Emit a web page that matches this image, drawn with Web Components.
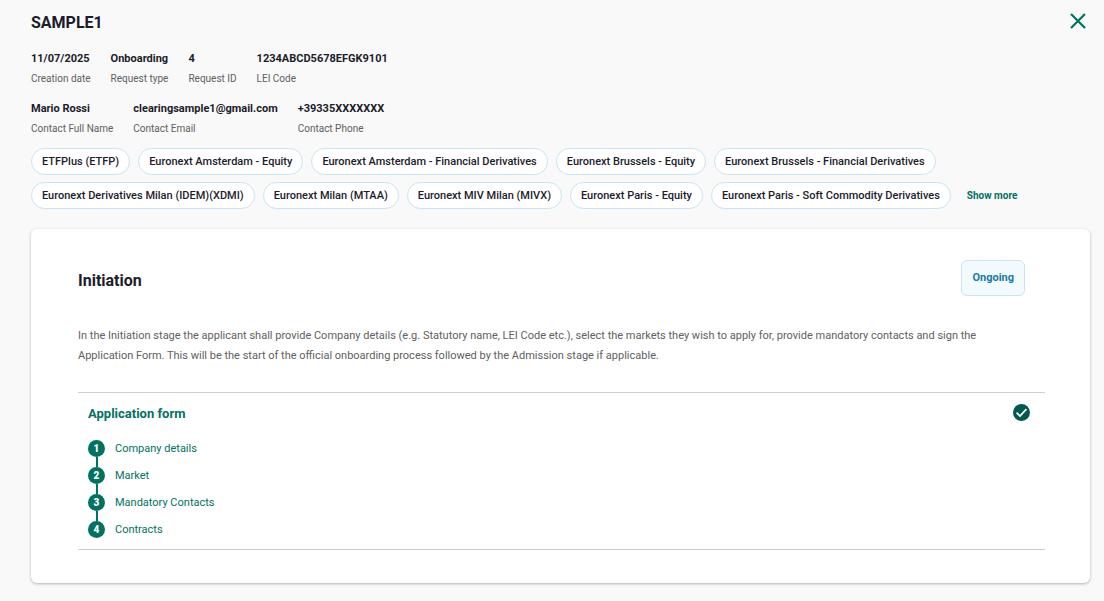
<!DOCTYPE html>
<html lang="en">
<head>
<meta charset="utf-8">
<meta name="viewport" content="width=device-width, initial-scale=1">
<title>SAMPLE1 - Onboarding request</title>
<style>
  :root {
    --green: #00725f;
    --green-dark: #00594c;
    --ink: #1c1c2b;
    --muted: #606060;
    --chip-border: #c5e6f2;
    --line: #cfcfcf;
  }

  body {
    margin: 0;
    background: #f9f9f9;
    color: var(--ink);
    font: 11px/16px Roboto, "Liberation Sans", sans-serif;
  }
</style>
</head>
<body>
<request-page></request-page>

<script>
function define(name, html, setup) {
  if (customElements.get(name)) return;

  const template = document.createElement('template');
  template.innerHTML = html;

  customElements.define(name, class extends HTMLElement {
    constructor() {
      super();
      this.attachShadow({ mode: 'open' });
      this.shadowRoot.appendChild(template.content.cloneNode(true));
    }

    connectedCallback() {
      if (setup) setup(this, this.shadowRoot);
    }
  });
}

// value on top, caption below
define('info-field', `
  <style>
    :host { display: block; }
    dl { margin: 0; display: flex; flex-direction: column-reverse; gap: 5px; }
    dt { font-size: 10px; line-height: 14px; color: var(--muted); }
    dd { margin: 0; font-weight: 700; line-height: 16px; }
  </style>
  <dl><dt></dt><dd><slot></slot></dd></dl>
`, (host, root) => {
  root.querySelector('dt').textContent = host.getAttribute('label');
});

define('market-chip', `
  <style>
    :host {
      display: block;
      box-sizing: border-box;
      padding: 5px 10px 4px;
      border: 1px solid var(--chip-border);
      border-radius: 14px;
      background: #fff;
      font-weight: 500;
      white-space: nowrap;
    }
  </style>
  <slot></slot>
`);

define('status-badge', `
  <style>
    :host {
      display: block;
      padding: 9px 10px;
      border: 1px solid var(--chip-border);
      border-radius: 6px;
      background: #f2fafe;
      color: #1b7ba6;
      font-weight: 700;
    }
  </style>
  <slot></slot>
`);

define('form-step', `
  <style>
    :host { display: flex; align-items: flex-start; gap: 10px; color: var(--green); }
    .track { display: flex; flex-direction: column; align-items: center; align-self: stretch; }
    .dot {
      width: 17px;
      height: 17px;
      border-radius: 50%;
      background: var(--green);
      color: #fff;
      font-size: 10px;
      line-height: 17px;
      font-weight: 900;
      text-align: center;
    }
    .track::after { content: ""; width: 2px; height: 10px; background: var(--green); }
    :host([last]) .track::after { display: none; }
    a { color: inherit; text-decoration: none; line-height: 17px; }
    a:hover { text-decoration: underline; }
  </style>
  <span class="track"><span class="dot"></span></span>
  <a href="#"><slot></slot></a>
`, (host, root) => {
  root.querySelector('.dot').textContent = host.getAttribute('number');
});

define('stage-section', `
  <style>
    :host {
      display: block;
      border: solid var(--line);
      border-width: 1px 0;
      padding: 10px 15px 11px 10px;
    }
    header { display: flex; justify-content: space-between; align-items: flex-start; }
    h3 { margin: 0; padding-top: 1px; font-size: 13px; line-height: 20px; color: var(--green); }
    svg { display: block; margin-top: 1px; }
    .steps { margin-top: 16px; }
  </style>
  <header>
    <h3></h3>
    <svg width="17" height="17" viewBox="0 0 17 17" role="img" aria-label="Completed">
      <circle cx="8.5" cy="8.5" r="8.5" fill="#00594c"/>
      <path d="M3.5 8.7 7 12 13.4 5.2" fill="none" stroke="#fff" stroke-width="1.8"/>
    </svg>
  </header>
  <div class="steps"><slot></slot></div>
`, (host, root) => {
  root.querySelector('h3').textContent = host.getAttribute('heading');
});

define('stage-card', `
  <style>
    :host {
      display: block;
      padding: 31px 45px 33px 47px;
      border-radius: 6px;
      background: #fff;
      box-shadow: 0 1px 3px rgba(0, 0, 0, 0.28);
    }
    header {
      display: flex;
      justify-content: space-between;
      align-items: center;
      padding-right: 20px;
    }
    h2 { margin: 0; padding-top: 6px; font-size: 16px; line-height: 22px; }
    .text { margin: 30px 0 26px; padding-right: 20px; line-height: 20px; color: var(--muted); }
  </style>
  <header><h2></h2><slot name="status"></slot></header>
  <div class="text"><slot name="text"></slot></div>
  <slot></slot>
`, (host, root) => {
  root.querySelector('h2').textContent = host.getAttribute('heading');
});

define('request-page', `
  <style>
    :host { display: block; padding: 13px 14px 18px 31px; }
    button { border: 0; padding: 0; background: none; font: inherit; cursor: pointer; }
    .top { display: flex; justify-content: space-between; align-items: flex-start; }
    h1 { margin: 0; font-size: 16px; line-height: 20px; }
    .close { margin-right: 4px; }
    .close svg { display: block; }
    .fields { display: flex; flex-wrap: wrap; gap: 20px; }
    .first { margin: 18px 0 15px; }
    .chips { display: flex; flex-wrap: wrap; align-items: center; gap: 7px 8px; margin: 12px 0 20px; }
    .more { margin-left: 8px; font-size: 10px; font-weight: 700; color: var(--green); }
    p { margin: 0; }
  </style>
  <div class="top">
    <h1>SAMPLE1</h1>
    <button class="close" type="button" aria-label="Close">
      <svg width="16" height="16" viewBox="0 0 16 16">
        <path d="M1 1 15 15M15 1 1 15" stroke="#00725f" stroke-width="2.2"/>
      </svg>
    </button>
  </div>
  <div class="fields first">
    <info-field label="Creation date">11/07/2025</info-field>
    <info-field label="Request type">Onboarding</info-field>
    <info-field label="Request ID">4</info-field>
    <info-field label="LEI Code">1234ABCD5678EFGK9101</info-field>
  </div>
  <div class="fields">
    <info-field label="Contact Full Name">Mario Rossi</info-field>
    <info-field label="Contact Email">clearingsample1@gmail.com</info-field>
    <info-field label="Contact Phone">+39335XXXXXXX</info-field>
  </div>
  <div class="chips">
    <market-chip>ETFPlus (ETFP)</market-chip>
    <market-chip>Euronext Amsterdam - Equity</market-chip>
    <market-chip>Euronext Amsterdam - Financial Derivatives</market-chip>
    <market-chip>Euronext Brussels - Equity</market-chip>
    <market-chip>Euronext Brussels - Financial Derivatives</market-chip>
    <market-chip>Euronext Derivatives Milan (IDEM)(XDMI)</market-chip>
    <market-chip>Euronext Milan (MTAA)</market-chip>
    <market-chip>Euronext MIV Milan (MIVX)</market-chip>
    <market-chip>Euronext Paris - Equity</market-chip>
    <market-chip>Euronext Paris - Soft Commodity Derivatives</market-chip>
    <button class="more" type="button">Show more</button>
  </div>
  <stage-card heading="Initiation">
    <status-badge slot="status">Ongoing</status-badge>
    <p slot="text">In the Initiation stage the applicant shall provide Company details (e.g. Statutory name, LEI Code etc.), select the markets they wish to apply for, provide mandatory contacts and sign the Application Form. This will be the start of the official onboarding process followed by the Admission stage if applicable.</p>
    <stage-section heading="Application form">
      <form-step number="1">Company details</form-step>
      <form-step number="2">Market</form-step>
      <form-step number="3">Mandatory Contacts</form-step>
      <form-step number="4" last>Contracts</form-step>
    </stage-section>
  </stage-card>
`);
</script>
</body>
</html>
